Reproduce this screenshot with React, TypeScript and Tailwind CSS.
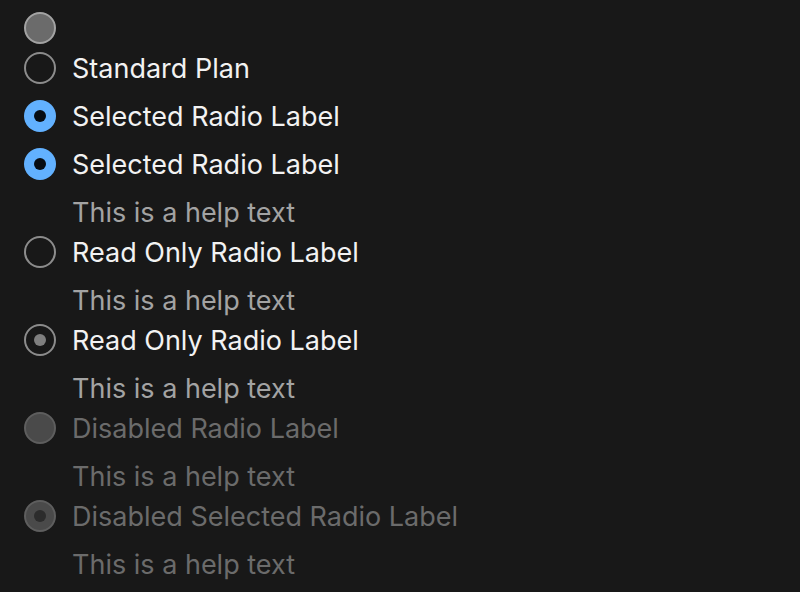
import React from 'react';

type RadioState = 'hover' | 'default' | 'selected' | 'readonly' | 'readonlySelected' | 'disabled' | 'disabledSelected';

interface RadioItem {
  state: RadioState;
  label?: string;
  help?: string;
}

const items: RadioItem[] = [
  { state: 'hover' },
  { state: 'default', label: 'Standard Plan' },
  { state: 'selected', label: 'Selected Radio Label' },
  { state: 'selected', label: 'Selected Radio Label', help: 'This is a help text' },
  { state: 'readonly', label: 'Read Only Radio Label', help: 'This is a help text' },
  { state: 'readonlySelected', label: 'Read Only Radio Label', help: 'This is a help text' },
  { state: 'disabled', label: 'Disabled Radio Label', help: 'This is a help text' },
  { state: 'disabledSelected', label: 'Disabled Selected Radio Label', help: 'This is a help text' },
];

const Circle: React.FC<{ state: RadioState }> = ({ state }) => {
  switch (state) {
    case 'hover':
      return <span className="w-8 h-8 shrink-0 rounded-full border-2 border-[#a3a3a3] bg-[#6b6b6b]" />;
    case 'selected':
      return (
        <span className="w-8 h-8 shrink-0 rounded-full bg-[#62b1ff] flex items-center justify-center">
          <span className="w-3 h-3 rounded-full bg-[#070d14]" />
        </span>
      );
    case 'readonlySelected':
      return (
        <span className="w-8 h-8 shrink-0 rounded-full border-2 border-[#8c8c8c] flex items-center justify-center">
          <span className="w-3 h-3 rounded-full bg-[#7f7f7f]" />
        </span>
      );
    case 'disabled':
      return <span className="w-8 h-8 shrink-0 rounded-full border-2 border-[#5e5e5e] bg-[#4a4a4a]" />;
    case 'disabledSelected':
      return (
        <span className="w-8 h-8 shrink-0 rounded-full border-2 border-[#5e5e5e] bg-[#4a4a4a] flex items-center justify-center">
          <span className="w-3 h-3 rounded-full bg-[#2c2c2c]" />
        </span>
      );
    default:
      return <span className="w-8 h-8 shrink-0 rounded-full border-2 border-[#8c8c8c]" />;
  }
};

export default function App() {
  return (
    <div
      className="min-h-screen bg-[#181818] px-6 pt-3 flex flex-col gap-2"
      style={{ fontFamily: 'Inter, "Noto Sans", sans-serif' }}
    >
      {items.map((item, i) => {
        const disabled = item.state === 'disabled' || item.state === 'disabledSelected';
        return (
          <div key={i} className={`flex flex-col gap-4 ${item.label && !item.help ? 'mb-2' : ''}`}>
            <label className="flex items-center gap-4 h-8">
              <Circle state={item.state} />
              {item.label && (
                <span className={`text-[27px] leading-8 pt-px ${disabled ? 'text-[#6b6b6b]' : 'text-[#f2f2f2]'}`}>
                  {item.label}
                </span>
              )}
            </label>
            {item.help && (
              <p className={`pl-12 h-8 text-[27px] leading-8 pt-px ${disabled ? 'text-[#6b6b6b]' : 'text-[#a3a3a3]'}`}>
                {item.help}
              </p>
            )}
          </div>
        );
      })}
    </div>
  );
}
